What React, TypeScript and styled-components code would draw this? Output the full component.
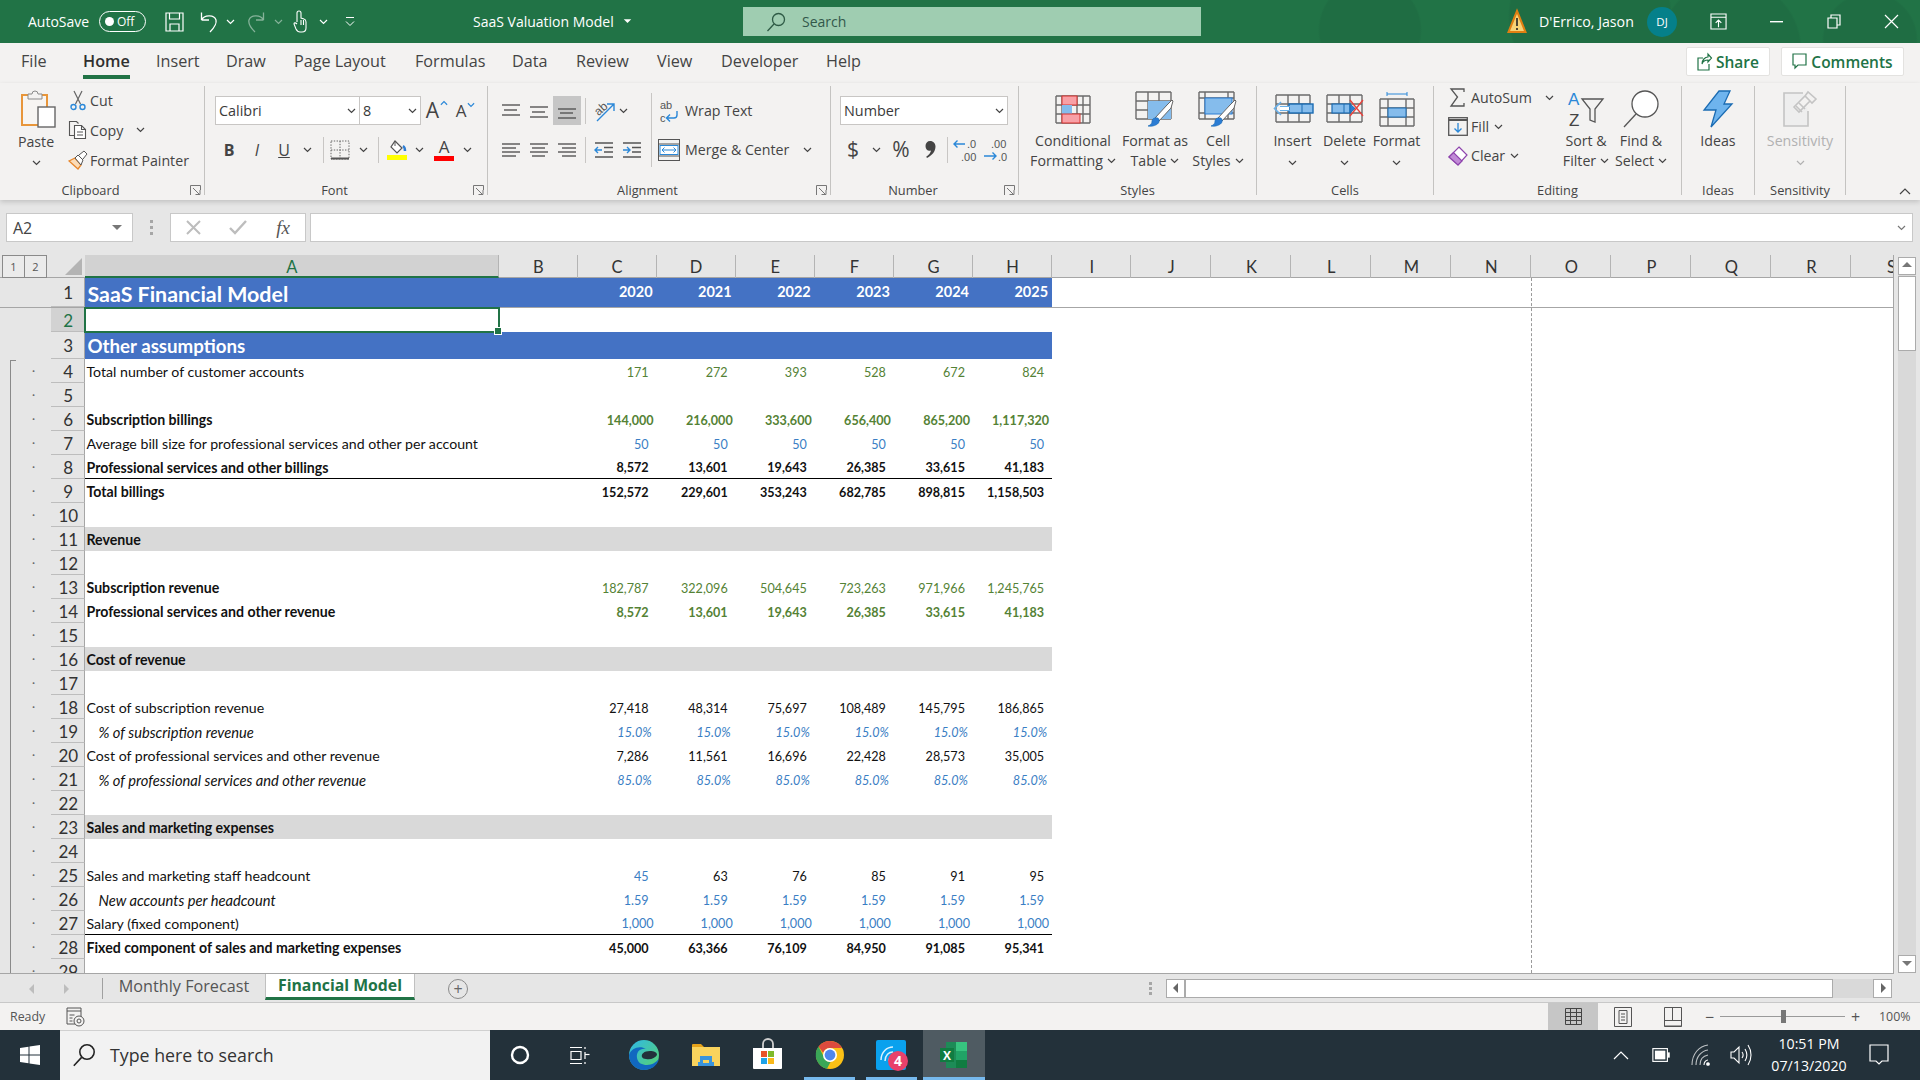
import React from 'react';
import styled, { createGlobalStyle } from 'styled-components';

const GlobalStyle = createGlobalStyle`
  html, body {
    margin: 0;
    width: 1920px;
    height: 1080px;
    overflow: hidden;
    background: #e6e6e6;
  }
  * { box-sizing: border-box; }
  svg { overflow: visible; }
`;

const UI = `"Open Sans", "Noto Sans", sans-serif`;
const CELL = `Lato, "Liberation Sans", sans-serif`;
const ICON_TEXT = `"Liberation Sans", sans-serif`;
const GREEN = '#217346';

const Page = styled.div`
  width: 1920px;
  height: 1080px;
  display: flex;
  flex-direction: column;
  font-family: ${UI};
  color: #444;
`;

/* ---------- title bar ---------- */

const TitleBar = styled.header`
  height: 43px;
  flex: none;
  display: flex;
  align-items: center;
  color: #fff;
  background:
    radial-gradient(circle at 1370px 30px, #1f6d43 0 50px, transparent 52px),
    radial-gradient(circle at 1590px 16px, #1f6d43 0 80px, transparent 82px),
    radial-gradient(circle at 1730px 50px, #1f6d43 0 70px, transparent 72px),
    radial-gradient(circle at 1870px 40px, #1f6d43 0 46px, transparent 48px),
    ${GREEN};
`;

const QuickBar = styled.div`
  width: 473px;
  padding-left: 28px;
  display: flex;
  align-items: center;
  flex: none;
`;

const AutoSaveLabel = styled.span`
  width: 71px;
  font-size: 14px;
`;

const Toggle = styled.div`
  width: 47px;
  height: 21px;
  margin-right: 14px;
  border: 1.5px solid #fff;
  border-radius: 11px;
  display: flex;
  align-items: center;
  gap: 3px;
  padding-left: 5px;
  font-size: 12px;
  &::before {
    content: '';
    width: 9px;
    height: 9px;
    border-radius: 50%;
    background: #fff;
  }
`;

const Tool = styled.div<{ $w: number; $active?: boolean; $h?: number; $dim?: boolean }>`
  width: ${p => p.$w}px;
  height: ${p => p.$h ?? 29}px;
  flex: none;
  display: flex;
  align-items: center;
  justify-content: center;
  background: ${p => (p.$active ? '#c6c6c6' : 'transparent')};
  opacity: ${p => (p.$dim ? 0.45 : 1)};
`;

const DocTitle = styled.div`
  width: 270px;
  flex: none;
  display: flex;
  align-items: center;
  gap: 9px;
  font-size: 14px;
`;

const SearchBox = styled.div`
  width: 458px;
  height: 29px;
  flex: none;
  background: #9fcdb1;
  color: #32584a;
  display: flex;
  align-items: center;
  padding-left: 23px;
  gap: 16px;
  font-size: 14px;
`;

const Account = styled.div`
  margin-left: auto;
  display: flex;
  align-items: center;
`;

const UserName = styled.span`
  font-size: 14.2px;
  width: 108px;
  margin-left: 9px;
`;

const Avatar = styled.div`
  width: 30px;
  height: 30px;
  border-radius: 50%;
  background: #05808a;
  margin-right: 13px;
  display: flex;
  align-items: center;
  justify-content: center;
  font-size: 11.5px;
`;

/* ---------- menu tabs ---------- */

const MenuRow = styled.nav`
  height: 40px;
  flex: none;
  display: flex;
  background: #f3f2f1;
  padding-left: 21px;
`;

const MenuTab = styled.div<{ $w: number; $on?: boolean }>`
  width: ${p => p.$w}px;
  height: 36px;
  padding-top: 6px;
  font-size: 16.2px;
  line-height: 24px;
  white-space: nowrap;
  font-weight: ${p => (p.$on ? 600 : 400)};
  color: ${p => (p.$on ? '#2f2f2f' : '#444')};
  position: relative;
  &::after {
    content: '';
    display: ${p => (p.$on ? 'block' : 'none')};
    position: absolute;
    left: 0;
    top: 32px;
    width: 47px;
    height: 4px;
    background: ${GREEN};
  }
`;

const MenuActions = styled.div`
  margin-left: auto;
  padding: 4px 16px 0 0;
  display: flex;
  align-items: flex-start;
  gap: 11px;
`;

const ActionButton = styled.button<{ $w: number }>`
  width: ${p => p.$w}px;
  height: 29px;
  background: #fff;
  border: 1px solid #e3e2e0;
  border-radius: 2px;
  color: ${GREEN};
  font-family: ${UI};
  font-size: 15.5px;
  font-weight: 600;
  display: flex;
  align-items: center;
  justify-content: center;
  gap: 4px;
  padding: 0;
`;

/* ---------- ribbon ---------- */

const Ribbon = styled.section`
  height: 117px;
  flex: none;
  display: flex;
  align-items: flex-start;
  padding-top: 3px;
  background: #f3f2f1;
  box-shadow: 0 2px 5px rgba(0, 0, 0, 0.16);
  position: relative;
  z-index: 1;
`;

const Group = styled.div<{ $w: number }>`
  width: ${p => p.$w}px;
  height: 114px;
  flex: none;
  display: flex;
  flex-direction: column;
`;

const GroupBody = styled.div<{ $pad?: number }>`
  height: 95px;
  padding-left: ${p => p.$pad ?? 0}px;
  display: flex;
`;

const GroupFoot = styled.div`
  height: 18px;
  display: flex;
  align-items: center;
  font-size: 12.8px;
  color: #444;
`;

const GroupName = styled.span<{ $shift?: boolean }>`
  flex: 1;
  text-align: center;
  padding-right: ${p => (p.$shift ? 5 : 0)}px;
`;

const CollapseSlot = styled.span`
  flex: 1;
  text-align: right;
  padding-right: 9px;
`;

const Launcher = styled.span`
  width: 18px;
  display: flex;
  justify-content: center;
`;

const Divider = styled.div`
  width: 1px;
  height: 109px;
  flex: none;
  background: #c4c3c1;
`;

const PasteColumn = styled.div`
  width: 60px;
  margin-left: 6px;
  padding-top: 4px;
  display: flex;
  flex-direction: column;
  align-items: center;
  font-size: 14.2px;
`;

const PasteLabel = styled.span`
  height: 20px;
  margin-top: 3px;
  display: flex;
  align-items: center;
`;

const StackColumn = styled.div<{ $w?: number; $row?: number; $top?: number }>`
  width: ${p => (p.$w ? `${p.$w}px` : 'auto')};
  margin-top: ${p => p.$top ?? 0}px;
  display: flex;
  flex-direction: column;
  & > * { height: ${p => p.$row ?? 30}px; flex: none; }
`;

const TextRow = styled.div`
  display: flex;
  align-items: center;
  font-size: 14.2px;
  white-space: nowrap;
`;

const RowIcon = styled.span<{ $w: number }>`
  width: ${p => p.$w}px;
  flex: none;
  display: flex;
  justify-content: center;
  align-items: center;
`;

const ToolRows = styled.div`
  padding-top: 10px;
  display: flex;
  flex-direction: column;
  gap: 10px;
`;

const ToolRow = styled.div`
  height: 29px;
  display: flex;
  align-items: center;
`;

const ComboBox = styled.div<{ $w: number }>`
  width: ${p => p.$w}px;
  height: 29px;
  flex: none;
  background: #fff;
  border: 1px solid #c8c6c4;
  margin-right: -1px;
  display: flex;
  align-items: center;
  justify-content: space-between;
  padding: 0 3px 0 3px;
  font-size: 14.4px;
  color: #3a3a3a;
`;

const Bar = styled.span`
  width: 1px;
  height: 26px;
  background: #c8c6c4;
`;

const BlockSplit = styled.div`
  width: 1px;
  height: 74px;
  margin: 7px 0 0 5px;
  background: #c8c6c4;
  flex: none;
`;

const FontGlyph = styled.span<{ $size?: number; $bold?: boolean; $italic?: boolean; $line?: boolean }>`
  font-family: ${UI};
  font-size: ${p => p.$size ?? 15}px;
  font-weight: ${p => (p.$bold ? 700 : 400)};
  font-style: ${p => (p.$italic ? 'italic' : 'normal')};
  text-decoration: ${p => (p.$line ? 'underline' : 'none')};
  color: #444;
  line-height: 1;
`;

const GrowGlyph = styled.span`
  display: flex;
  align-items: flex-start;
  gap: 1px;
`;

const ColorA = styled.span<{ $color: string }>`
  display: flex;
  flex-direction: column;
  align-items: center;
  font-size: 17px;
  line-height: 18px;
  color: #444;
  &::after {
    content: '';
    width: 20px;
    height: 5px;
    background: ${p => p.$color};
  }
`;

const BigButton = styled.div<{ $w: number; $muted?: boolean }>`
  width: ${p => p.$w}px;
  flex: none;
  padding-top: 4px;
  display: flex;
  flex-direction: column;
  align-items: center;
  font-size: 14.2px;
  line-height: 20px;
  color: ${p => (p.$muted ? '#b1b1b1' : '#444')};
`;

const BigIcon = styled.div`
  height: 38px;
  margin-bottom: 3px;
  display: flex;
  align-items: center;
  justify-content: center;
`;

const LabelLine = styled.span`
  height: 20px;
  display: flex;
  align-items: center;
  gap: 4px;
  white-space: nowrap;
`;

const ChevLine = styled.span`
  height: 20px;
  display: flex;
  align-items: center;
  padding-top: 4px;
`;

/* ---------- formula bar ---------- */

const FormulaBar = styled.div`
  height: 55px;
  flex: none;
  display: flex;
  padding: 13px 7px 13px 6px;
  background: #e6e6e6;
`;

const NameBox = styled.div`
  width: 127px;
  background: #fff;
  border: 1px solid #c8c8c8;
  display: flex;
  align-items: center;
  justify-content: space-between;
  padding: 0 9px 0 6px;
  font-size: 16px;
  color: #444;
`;

const GripDots = styled.div`
  width: 37px;
  flex: none;
  display: flex;
  flex-direction: column;
  align-items: center;
  justify-content: center;
  gap: 3px;
  & > i {
    width: 3px;
    height: 3px;
    background: #a6a6a6;
    display: block;
  }
`;

const FxBox = styled.div`
  width: 136px;
  margin-right: 4px;
  background: #fff;
  border: 1px solid #c8c8c8;
  display: flex;
  align-items: center;
  flex: none;
`;

const FormulaInput = styled.div`
  flex: 1;
  background: #fff;
  border: 1px solid #c8c8c8;
  display: flex;
  align-items: center;
  justify-content: flex-end;
  padding-right: 6px;
`;

const FxText = styled.span`
  font-family: "Liberation Serif", serif;
  font-style: italic;
  font-size: 19px;
  color: #555;
`;

/* ---------- sheet ---------- */

const SheetArea = styled.main`
  height: 719px;
  flex: none;
  display: flex;
  background: #e6e6e6;
`;

const Sheet = styled.div`
  width: 1894px;
  flex: none;
  overflow: hidden;
  position: relative;
  border-right: 1px solid #a6a6a6;
  border-bottom: 1px solid #a6a6a6;
  font-family: ${CELL};
  background: #fff;
`;

const COLS = '51px 33.5px 414.5px 78.5px repeat(6, 79.1px)';

const HeadRow = styled.div`
  height: 23px;
  display: grid;
  grid-template-columns: ${COLS} 79.3px repeat(10, 80px);
  background: #e6e6e6;
  border-bottom: 1px solid #a6a6a6;
`;

const LevelButtons = styled.div`
  display: flex;
  height: 23px;
  padding-left: 2px;
  & > span {
    width: 23px;
    border: 1px solid #8a8a8a;
    margin-right: -1px;
    background: #ebebeb;
    font-family: ${UI};
    font-size: 11px;
    line-height: 21px;
    text-align: center;
    color: #555;
  }
`;

const CornerCell = styled.div`
  display: flex;
  align-items: flex-end;
  justify-content: flex-end;
  padding: 0 3px 3px 0;
`;

const ColHead = styled.div<{ $on?: boolean }>`
  height: 23px;
  padding-left: 1px;
  text-align: center;
  font-size: 16.5px;
  line-height: 24px;
  color: ${p => (p.$on ? GREEN : '#333')};
  background: ${p => (p.$on ? '#d2d2d2' : 'transparent')};
  border-right: 1px solid #b4b4b4;
  border-bottom: ${p => (p.$on ? `2px solid ${GREEN}` : 'none')};
  overflow: hidden;
`;

const RowLine = styled.div<{ $h: number; $freeze?: boolean }>`
  height: ${p => p.$h}px;
  display: grid;
  grid-template-columns: ${COLS} 1fr;
  border-bottom: ${p => (p.$freeze ? '1px solid #a6a6a6' : 'none')};
`;

const Gutter = styled.div`
  background: #e6e6e6;
  display: flex;
  align-items: center;
  justify-content: flex-end;
  padding-right: 16px;
  color: #666;
  font-size: 12px;
  line-height: 1;
`;

const RowHead = styled.div<{ $on?: boolean }>`
  background: ${p => (p.$on ? '#d2d2d2' : '#e6e6e6')};
  color: ${p => (p.$on ? GREEN : '#333')};
  border-bottom: 1px solid #bdbdbd;
  border-right: 1px solid #a6a6a6;
  font-size: 17px;
  text-align: center;
  display: flex;
  align-items: center;
  justify-content: center;
  padding: 1px 0 0 2px;
`;

const Cell = styled.div<{
  $fill?: string;
  $rule?: boolean;
  $right?: number;
  $tone?: string;
  $bold?: boolean;
  $italic?: boolean;
  $indent?: number;
  $size?: number;
  $pick?: boolean;
  $top?: number;
  $year?: boolean;
}>`
  background: ${p => p.$fill ?? 'transparent'};
  border-bottom: ${p => (p.$rule ? '1px solid #000' : 'none')};
  padding: ${p => p.$top ?? 1}px ${p => p.$right ?? 0}px 0 ${p => p.$indent ?? 0}px;
  color: ${p => p.$tone ?? '#111'};
  font-weight: ${p => (p.$bold ? 700 : 400)};
  font-style: ${p => (p.$italic ? 'italic' : 'normal')};
  font-size: ${p => p.$size ?? 12.6}px;
  white-space: nowrap;
  display: flex;
  align-items: ${p => (p.$year ? 'flex-start' : 'center')};
  justify-content: ${p => (p.$right !== undefined ? 'flex-end' : 'flex-start')};
  position: relative;
  ${p =>
    p.$pick
      ? `
    z-index: 2;
    box-shadow: 0 0 0 1px ${GREEN}, inset 0 0 0 1px ${GREEN};
    &::after {
      content: '';
      position: absolute;
      right: -3px;
      bottom: -3px;
      width: 6px;
      height: 6px;
      background: ${GREEN};
      border: 1px solid #fff;
    }
  `
      : ''}
`;

const OutlineRail = styled.div`
  position: absolute;
  left: 10px;
  top: 105px;
  bottom: 0;
  width: 6px;
  border-left: 1.5px solid #8a8a8a;
  border-top: 1.5px solid #8a8a8a;
`;

const PageBreak = styled.div`
  position: absolute;
  left: 1531px;
  top: 23px;
  bottom: 0;
  border-left: 1px dashed #9a9a9a;
`;

const VScroll = styled.div`
  width: 26px;
  flex: none;
  padding: 2px 4px 1px 4px;
  display: flex;
  flex-direction: column;
`;

const ScrollButton = styled.div`
  height: 18px;
  flex: none;
  background: #fff;
  border: 1px solid #ababab;
  display: flex;
  align-items: center;
  justify-content: center;
`;

const VTrack = styled.div`
  flex: 1;
  background: #d9d9d9;
  padding-top: 1px;
`;

const VThumb = styled.div`
  height: 75px;
  background: #fff;
  border: 1px solid #ababab;
`;

/* ---------- sheet tabs ---------- */

const TabsBar = styled.div`
  height: 29px;
  flex: none;
  display: flex;
  background: #e6e6e6;
  border-bottom: 1px solid #c8c8c8;
`;

const TabNav = styled.div`
  width: 103px;
  height: 21px;
  margin-top: 4px;
  display: flex;
  align-items: center;
  padding-left: 26px;
  gap: 22px;
  border-right: 1px solid #a0a0a0;
  flex: none;
`;

const SheetTab = styled.div<{ $on?: boolean; $w: number }>`
  width: ${p => p.$w}px;
  height: 26px;
  flex: none;
  display: flex;
  align-items: center;
  justify-content: center;
  padding-bottom: 2px;
  white-space: nowrap;
  font-size: ${p => (p.$on ? 15.8 : 16.2)}px;
  font-weight: ${p => (p.$on ? 700 : 400)};
  color: ${p => (p.$on ? GREEN : '#555')};
  background: ${p => (p.$on ? '#fff' : 'transparent')};
  border-bottom: ${p => (p.$on ? `3px solid ${GREEN}` : 'none')};
  border-left: ${p => (p.$on ? '1px solid #c0c0c0' : 'none')};
  border-right: ${p => (p.$on ? '1px solid #c0c0c0' : 'none')};
`;

const AddSheet = styled.div`
  width: 20px;
  height: 20px;
  margin: 5px 0 0 33px;
  border: 1.5px solid #8a8a8a;
  border-radius: 50%;
  flex: none;
  color: #666;
  display: flex;
  align-items: center;
  justify-content: center;
  font-size: 16px;
  line-height: 1;
`;

const HScrollWrap = styled.div`
  margin-left: auto;
  width: 786px;
  padding: 5px 28px 5px 0;
  display: flex;
  align-items: center;
`;

const HGrip = styled(GripDots)`
  width: 32px;
  gap: 2px;
`;

const HButton = styled(ScrollButton)`
  width: 19px;
  height: 19px;
`;

const HTrack = styled.div`
  flex: 1;
  height: 19px;
  background: #d9d9d9;
`;

const HThumb = styled.div`
  width: 648px;
  height: 19px;
  background: #fff;
  border: 1px solid #ababab;
`;

/* ---------- status bar ---------- */

const StatusBar = styled.footer`
  height: 27px;
  flex: none;
  display: flex;
  align-items: center;
  background: #f3f2f1;
  font-size: 12.4px;
  color: #555;
  padding-left: 10px;
`;

const StatusRight = styled.div`
  margin-left: auto;
  display: flex;
  align-items: center;
  height: 27px;
`;

const ViewButton = styled.div<{ $on?: boolean }>`
  width: 50px;
  height: 27px;
  background: ${p => (p.$on ? '#c6c6c6' : 'transparent')};
  display: flex;
  align-items: center;
  justify-content: center;
`;

const ZoomBar = styled.div`
  width: 125px;
  height: 1px;
  background: #9a9a9a;
  margin: 0 5px;
  position: relative;
  &::after {
    content: '';
    position: absolute;
    left: 61px;
    top: -6px;
    width: 5px;
    height: 13px;
    background: #777;
  }
`;

const ZoomSign = styled.span`
  font-size: 16px;
  width: 11px;
  text-align: center;
  color: #555;
  line-height: 1;
`;

const ZoomValue = styled.span`
  width: 59px;
  padding-left: 18px;
  font-size: 12.4px;
`;

/* ---------- taskbar ---------- */

const Taskbar = styled.div`
  height: 50px;
  flex: none;
  display: flex;
  align-items: stretch;
  background: #23313a;
  color: #fff;
`;

const StartButton = styled.div`
  width: 60px;
  flex: none;
  display: flex;
  align-items: center;
  justify-content: center;
`;

const TaskSearch = styled.div`
  width: 430px;
  flex: none;
  background: #f2f2f2;
  color: #333;
  display: flex;
  align-items: center;
  padding: 0 0 2px 12px;
  gap: 14px;
  font-size: 17.8px;
  border-top: 1px solid #d0d0d0;
`;

const TaskItem = styled.div<{ $w: number; $open?: boolean; $current?: boolean }>`
  width: ${p => p.$w}px;
  flex: none;
  display: flex;
  align-items: center;
  justify-content: center;
  position: relative;
  background: ${p => (p.$current ? '#4f5b62' : 'transparent')};
  &::after {
    content: '';
    display: ${p => (p.$open ? 'block' : 'none')};
    position: absolute;
    bottom: 0;
    left: ${p => (p.$current ? 0 : 5)}px;
    right: ${p => (p.$current ? 0 : 6)}px;
    height: 3px;
    background: #76b9ed;
  }
`;

const Tray = styled.div`
  margin-left: auto;
  display: flex;
  align-items: center;
  padding-right: 17px;
`;

const TrayItem = styled.div`
  width: 40px;
  display: flex;
  justify-content: center;
`;

const Clock = styled.div`
  width: 92px;
  margin-left: 2px;
  text-align: center;
  font-size: 14.2px;
  line-height: 22px;
`;

const NotifyBox = styled.div`
  width: 48px;
  display: flex;
  justify-content: center;
`;

/* ---------- icons ---------- */

const Chev = ({ c = '#444' }: { c?: string }) => (
  <svg width="9" height="6" viewBox="0 0 9 6"><path d="M1 1l3.500 3.500L8 1" fill="none" stroke={c} strokeWidth="1.200" /></svg>
);

const LaunchIcon = () => (
  <svg width="11" height="11" viewBox="0 0 11 11" fill="none" stroke="#777">
    <path d="M.5 10V.5H10.500V5" />
    <path d="M3 3l6 6M5.500 9.500h4.500V5" />
  </svg>
);

const PasteIcon = () => (
  <svg width="38" height="38" viewBox="0 0 38 38">
    <rect x="5" y="5" width="25" height="30" fill="#f7f5f2" stroke="#e8963a" strokeWidth="2" />
    <path d="M11 9V4h4a3 3 0 016 0h4v5z" fill="#f3f2f1" stroke="#8a8a8a" />
    <rect x="21" y="17" width="17" height="20" fill="#fff" stroke="#666" strokeWidth="1.400" />
  </svg>
);

const CutIcon = () => (
  <svg width="16" height="21" viewBox="0 0 16 21" fill="none">
    <path d="M4 1l6.500 13M12 1L5.500 14" stroke="#666" strokeWidth="1.200" />
    <circle cx="3.500" cy="17" r="2.500" stroke="#2b88d8" strokeWidth="1.400" />
    <circle cx="12.500" cy="17" r="2.500" stroke="#2b88d8" strokeWidth="1.400" />
  </svg>
);

const CopyIcon = () => (
  <svg width="20" height="20" viewBox="0 0 20 20" fill="none" stroke="#555" strokeWidth="1.100">
    <path d="M6.500 15.500H1.500V1.500h7l2 2" />
    <path d="M6.500 5.500h7l4 4v9h-11z" fill="#fff" />
    <path d="M13.500 5.500v4h4M9 12h6M9 15h6" />
  </svg>
);

const PainterIcon = () => (
  <svg width="20" height="20" viewBox="0 0 20 20">
    <path d="M1 11l6-3 6 7-3 4z" fill="#fbdcb8" stroke="#e8862a" strokeWidth="1.300" />
    <path d="M7 8l3-3 5 5-2 5z" fill="#fff" stroke="#555" />
    <path d="M11 5l5-4 3 3-4 5" fill="#fff" stroke="#555" />
  </svg>
);

const BorderIcon = () => (
  <svg width="20" height="20" viewBox="0 0 20 20" fill="none" stroke="#666">
    <path d="M1 1h18v18H1z" strokeDasharray="1.400 1.400" />
    <path d="M10 1v18M1 10h18" strokeDasharray="1.400 1.400" />
    <path d="M1 18.500h18" strokeWidth="2" stroke="#555" />
  </svg>
);

const FillIcon = () => (
  <svg width="20" height="15" viewBox="0 0 20 15" fill="none">
    <path d="M8 1l7 7-5 5-6-6z" stroke="#555" strokeWidth="1.200" fill="#fff" />
    <path d="M8 1V6" stroke="#555" />
    <path d="M16 6c2 1 2 3 2 5" stroke="#2b7cd3" strokeWidth="2.500" />
  </svg>
);

const FillA = () => (
  <ColorA $color="#ffff00">
    <FillIcon />
  </ColorA>
);

const AlignLines = ({ y, lean }: { y: number[]; lean?: 'l' | 'c' | 'r' }) => {
  const segs = y.map((v, i) => {
    const short = i % 2 === 1;
    const x1 = short && lean === 'r' ? 5 : short && lean === 'c' ? 3 : 1;
    const x2 = short && lean === 'l' ? 15 : short && lean === 'c' ? 16 : 19;
    return <path key={v} d={`M${x1} ${v}H${x2}`} />;
  });
  return (
    <svg width="20" height="18" viewBox="0 0 20 18" fill="none" stroke="#555" strokeWidth="1.400">
      {segs}
    </svg>
  );
};

const OrientIcon = () => (
  <svg width="24" height="24" viewBox="0 0 24 24" fill="none">
    <text x="3" y="14" fontSize="12" fontFamily={ICON_TEXT} fill="#555" transform="rotate(-42 9 11)">ab</text>
    <path d="M5 22L22 5M15 5h7v7" stroke="#2b88d8" strokeWidth="1.400" />
  </svg>
);

const IndentIcon = ({ out }: { out?: boolean }) => (
  <svg width="20" height="18" viewBox="0 0 20 18" fill="none">
    <path d="M1 2h18M10 6.500h9M10 11h9M1 16h18" stroke="#555" strokeWidth="1.400" />
    {out
      ? <path d="M8 9H1M4 6L1 9l3 3" stroke="#2b88d8" strokeWidth="1.400" />
      : <path d="M1 9h7M5 6l3 3-3 3" stroke="#2b88d8" strokeWidth="1.400" />}
  </svg>
);

const WrapIcon = () => (
  <svg width="20" height="24" viewBox="0 0 20 24" fill="none">
    <text x="1" y="10" fontSize="11" fontFamily={ICON_TEXT} fill="#555">ab</text>
    <text x="1" y="22.700" fontSize="11" fontFamily={ICON_TEXT} fill="#555">c</text>
    <path d="M18 12v4a3 3 0 01-3 3H8M11 15.500l-3.500 3.500 3.500 3.500" stroke="#2b88d8" strokeWidth="1.400" />
  </svg>
);

const MergeIcon = () => (
  <svg width="22" height="22" viewBox="0 0 22 22" fill="none">
    <rect x=".5" y=".5" width="21" height="21" stroke="#555" />
    <path d="M.5 5h21M.5 17h21" stroke="#555" />
    <rect x="2" y="6.500" width="18" height="9" stroke="#2b88d8" fill="#fff" />
    <path d="M4 11h14M6.500 8.500L4 11l2.500 2.500M15.500 8.500L18 11l-2.500 2.500" stroke="#2b88d8" />
  </svg>
);

const DecimalIcon = ({ more }: { more?: boolean }) => (
  <svg width="26" height="24" viewBox="0 0 26 24">
    {more ? (
      <>
        <path d="M12 6H1M4.500 2.500L1 6l3.500 3.500" fill="none" stroke="#2b88d8" strokeWidth="1.400" />
        <text x="14" y="10" fontSize="11" fontFamily={ICON_TEXT} fill="#555">.0</text>
        <text x="8" y="22.700" fontSize="11" fontFamily={ICON_TEXT} fill="#555">.00</text>
      </>
    ) : (
      <>
        <text x="8" y="10" fontSize="11" fontFamily={ICON_TEXT} fill="#555">.00</text>
        <path d="M1 18h12M9.500 14.500L13 18l-3.500 3.500" fill="none" stroke="#2b88d8" strokeWidth="1.400" />
        <text x="15" y="22.700" fontSize="11" fontFamily={ICON_TEXT} fill="#555">.0</text>
      </>
    )}
  </svg>
);

const CommaIcon = () => (
  <svg width="11" height="17" viewBox="0 0 11 17">
    <path d="M5 0c3.500 0 5.500 2.500 5.500 5.500 0 5-3.500 9-8.500 11.500l-.8-1.200C4 14 5.800 11.500 6 9.500 3 10.500.5 8.500.5 5 .5 2 2.500 0 5 0z" fill="#444" />
  </svg>
);

const GridBase = ({ xs, ys }: { xs: number[]; ys: number[] }) => (
  <path
    d={`${xs.map(x => `M${x} ${ys[0]}V${ys[ys.length - 1]}`).join('')}${ys.map(y => `M${xs[0]} ${y}H${xs[xs.length - 1]}`).join('')}`}
    fill="none"
    stroke="#6b6b6b"
    strokeWidth="1.400"
  />
);

const ConditionalIcon = () => (
  <svg width="36" height="29" viewBox="0 0 36 29">
    <GridBase xs={[1, 7, 22, 28, 35]} ys={[1, 10, 19, 28]} />
    <rect x="7" y="1" width="15" height="9" fill="#f8a0a6" stroke="#d8332f" />
    <rect x="7" y="10" width="10" height="9" fill="#85bcec" />
    <rect x="7" y="19" width="18" height="9" fill="#f8a0a6" stroke="#d8332f" />
  </svg>
);

const Brush = () => (
  <g>
    <path d="M32 14L37 9 38 10 36 17 24 30 20 27z" fill="#fff" stroke="#666" />
    <path d="M20 27c3-1 5 1 4 4-1 3-7 5-11 4 3-1 4-3 4-5 0-1 1-3 3-3z" fill="#2b7cd3" stroke="#1b6cb3" strokeWidth=".6" />
  </g>
);

const TableIcon = () => (
  <svg width="40" height="36" viewBox="0 0 40 36">
    <GridBase xs={[1, 13, 24, 36]} ys={[1, 10, 19, 28]} />
    <rect x="13" y="10" width="23" height="18" fill="#85bcec" />
    <Brush />
  </svg>
);

const CellStyleIcon = () => (
  <svg width="40" height="36" viewBox="0 0 40 36">
    <GridBase xs={[1, 7, 30, 36]} ys={[1, 7, 22, 28]} />
    <rect x="7" y="7" width="27" height="16" fill="#85bcec" stroke="#2b7cd3" />
    <Brush />
  </svg>
);

const InsertIcon = () => (
  <svg width="42" height="30" viewBox="0 0 42 30">
    <GridBase xs={[4, 16, 27, 38]} ys={[1, 10, 19, 28]} />
    <rect x="17" y="10" width="24" height="9" fill="#85bcec" stroke="#1b6cb3" strokeWidth="1.400" />
    <path d="M30 10v9" stroke="#1b6cb3" />
    <path d="M17 12.500H8v4h9z" fill="#fff" />
    <path d="M18 12.500H8M18 16.500H8" stroke="#68b0ea" />
    <path d="M9 8L2.500 14.500 9 21" fill="none" stroke="#68b0ea" strokeWidth="1.600" />
  </svg>
);

const DeleteIcon = () => (
  <svg width="38" height="30" viewBox="0 0 38 30">
    <GridBase xs={[1, 13, 24, 36]} ys={[1, 10, 19, 28]} />
    <rect x="6" y="10" width="18" height="9" fill="#85bcec" stroke="#1b6cb3" strokeWidth="1.200" />
    <path d="M18 10v9M24 10l5 4.500-5 4.500z" fill="#2b7cd3" stroke="#1b6cb3" />
    <path d="M24 6l13 16M37 6L24 22" stroke="#e8413c" strokeWidth="1.300" fill="none" />
  </svg>
);

const FormatIcon = () => (
  <svg width="36" height="36" viewBox="0 0 36 36">
    <path d="M8 1v4M28 1v4M8 3h20" stroke="#2b88d8" fill="none" />
    <GridBase xs={[1, 9, 27, 35]} ys={[8, 17, 26, 35]} />
    <rect x="9" y="17" width="18" height="9" fill="#85bcec" stroke="#1b6cb3" />
  </svg>
);

const SigmaIcon = () => (
  <svg width="17" height="19" viewBox="0 0 17 19" fill="none"><path d="M15 4V1H2l6.500 8L2 18h13v-3" stroke="#555" strokeWidth="1.300" /></svg>
);

const FillDownIcon = () => (
  <svg width="20" height="19" viewBox="0 0 20 19" fill="none">
    <rect x=".7" y=".7" width="18.600" height="17.600" stroke="#555" strokeWidth="1.300" />
    <path d="M.7 3h18.600" stroke="#555" strokeWidth="2" />
    <path d="M10 6v9M6.500 11.500L10 15l3.500-3.500" stroke="#2b88d8" strokeWidth="1.300" />
  </svg>
);

const EraserIcon = () => (
  <svg width="20" height="20" viewBox="0 0 20 20">
    <path d="M11 1l8 8-9 10-9-8z" fill="#fff" stroke="#8e44ad" strokeWidth="1.200" />
    <path d="M1 11l4.500-4.500 8.500 8.500-4 4z" fill="#c08ad6" stroke="#8e44ad" strokeWidth="1.200" />
  </svg>
);

const SortIcon = () => (
  <svg width="38" height="38" viewBox="0 0 38 38" fill="none">
    <text x="1" y="15" fontSize="17" fontFamily={ICON_TEXT} fill="#2b88d8">A</text>
    <text x="2" y="35.500" fontSize="17" fontFamily={ICON_TEXT} fill="#444">Z</text>
    <path d="M15 9h21l-8 10v13l-5-2V19z" stroke="#555" strokeWidth="1.300" />
  </svg>
);

const FindIcon = () => (
  <svg width="38" height="38" viewBox="0 0 38 38" fill="none" stroke="#555" strokeWidth="1.300">
    <circle cx="23" cy="14" r="13" fill="#fff" />
    <path d="M14 24L2 37" />
  </svg>
);

const BoltIcon = () => (
  <svg width="30" height="38" viewBox="0 0 30 38">
    <path d="M16 1h11l-6 13h8L8 37l5-17H1z" fill="#6eb4ee" stroke="#1b6cb3" strokeWidth="1.300" />
  </svg>
);

const SensitivityIcon = () => (
  <svg width="36" height="38" viewBox="0 0 36 38" fill="none" stroke="#c4c4c4" strokeWidth="1.600">
    <path d="M21 3H2v33h24V21" fill="#eeeeee" />
    <path d="M12 17l11-11 5 5-11 11zM23 6l3-4 8 7-4 4-2-2z" fill="#f3f2f1" />
    <path d="M14 16l6 6M17 13l6 6" />
  </svg>
);

const WinSaveIcon = () => (
  <svg width="19" height="20" viewBox="0 0 19 20" fill="none" stroke="#fff" strokeWidth="1.200">
    <path d="M1 1h17v18H1z" />
    <path d="M4.500 1v6h10V1M5 19v-7h9v7" />
  </svg>
);

const UndoIcon = () => (
  <svg width="18" height="22" viewBox="0 0 18 22" fill="none" stroke="#fff" strokeWidth="1.300">
    <path d="M1.500 9V1.500M1.500 9H9M1.500 9C4 4 14 3 16 9c1 4-2 8-6 12" />
  </svg>
);

const RedoIcon = () => (
  <svg width="18" height="22" viewBox="0 0 18 22" fill="none" stroke="#fff" strokeWidth="1.300">
    <path d="M16.500 9V1.500M16.500 9H9M16.500 9C14 4 4 3 2 9c-1 4 2 8 6 12" />
  </svg>
);

const TouchIcon = () => (
  <svg width="14" height="23" viewBox="0 0 14 23" fill="none" stroke="#fff" strokeWidth="1.100">
    <path d="M4 12V3a2 2 0 014 0v5l3 1c2 .5 2 2 2 3v6c0 3-2 4-4 4H7c-2 0-3-1-4-3l-2-5c0-1 1-2 3 0" />
    <path d="M8 10v5M10.500 10v5" />
  </svg>
);

const CustomizeIcon = () => (
  <svg width="10" height="12" viewBox="0 0 10 12" fill="none" stroke="#fff"><path d="M1 1.500h8" /><path d="M1 5.500l4 4 4-4" /></svg>
);

const LensIcon = ({ c = '#fff', size = 20 }: { c?: string; size?: number }) => (
  <svg width={size} height={size} viewBox="0 0 20 20" fill="none" stroke={c} strokeWidth="1.300">
    <circle cx="12.500" cy="7.500" r="6" />
    <path d="M8 12L1.500 19" />
  </svg>
);

const WarnIcon = () => (
  <svg width="26" height="25" viewBox="0 0 20 25">
    <path d="M10 2L18.500 23H1.500z" fill="#f6d276" stroke="#e07f12" strokeWidth="2" />
    <path d="M10 9v8M10 19v2" stroke="#222" strokeWidth="1.600" />
  </svg>
);

const DisplayIcon = () => (
  <svg width="17" height="17" viewBox="0 0 18 18" fill="none" stroke="#fff" strokeWidth="1.200">
    <path d="M1 1h16v16H1zM1 4.500h16M9 15V8M6 10.500l3-3 3 3" />
  </svg>
);

const RestoreIcon = () => (
  <svg width="14" height="15" viewBox="0 0 14 15" fill="none" stroke="#fff" strokeWidth="1.200">
    <path d="M1 4h9v10H1zM4 4V1h9v10h-3" />
  </svg>
);

const ShareIcon = () => (
  <svg width="15" height="19" viewBox="0 0 15 19" fill="none" stroke={GREEN} strokeWidth="1.200">
    <path d="M6 6H1v12h11v-6" />
    <path d="M5 12c0-4 3-7 6-7V2l3.500 4-3.500 4V8c-3 0-5 1-6 4z" />
  </svg>
);

const BubbleIcon = () => (
  <svg width="15" height="17" viewBox="0 0 15 17" fill="none" stroke={GREEN} strokeWidth="1.200">
    <path d="M1 1h13v11H6l-3 3v-3H1z" />
  </svg>
);

const Tri = ({ dir, c = '#555', size = 12 }: { dir: 'u' | 'd' | 'l' | 'r'; c?: string; size?: number }) => {
  const d = { u: 'M1 7L6 2l5 5z', d: 'M1 3l5 5 5-5z', l: 'M8 1L3 6l5 5z', r: 'M4 1l5 5-5 5z' }[dir];
  return <svg width={size} height={size} viewBox="0 0 12 12"><path d={d} fill={c} /></svg>;
};

const MacroIcon = () => (
  <svg width="19" height="20" viewBox="0 0 19 20" fill="none" stroke="#555">
    <path d="M1 1h14v16H1zM1 4h14" />
    <path d="M3.500 8h5M3.500 11h3M3.500 14h3" />
    <circle cx="13" cy="14" r="5" fill="#f3f2f1" />
    <circle cx="13" cy="14" r="2" />
  </svg>
);

const GridViewIcon = () => (
  <svg width="17" height="17" viewBox="0 0 17 17" fill="none" stroke="#444">
    <path d="M.5 .5h16v16H.5zM.5 4.500h16M.5 8.500h16M.5 12.500h16M5.500 .5v16M11.500 .5v16" />
  </svg>
);

const PageViewIcon = () => (
  <svg width="18" height="20" viewBox="0 0 18 20" fill="none" stroke="#555">
    <path d="M.5 .5h17v19H.5zM5 3.500h8v13H5zM7 7h4M7 10h4M7 13h4" />
  </svg>
);

const BreakViewIcon = () => (
  <svg width="18" height="20" viewBox="0 0 18 20" fill="none" stroke="#555">
    <path d="M.5 .5h17v19H.5zM.5 13.500h17M8.500 .5v13M.5 19h17" />
  </svg>
);

const WinLogo = () => (
  <svg width="20" height="20" viewBox="0 0 20 20" fill="#fff">
    <path d="M0 3l8.500-1.200V9.500H0zM9.500 1.600L20 0v9.500H9.500zM0 10.500h8.500v7.700L0 17zM9.500 10.500H20V20L9.500 18.400z" />
  </svg>
);

const TaskViewIcon = () => (
  <svg width="20" height="19" viewBox="0 0 20 19" fill="none" stroke="#fff" strokeWidth="1.200">
    <path d="M0 1.500h12M0 17.500h12M1 5.500h10v8H1zM15 1v2M15 6v7M15 16v2" />
    <path d="M15 8.500h4.500" />
  </svg>
);

const EdgeIcon = () => (
  <svg width="32" height="32" viewBox="0 0 32 32">
    <defs>
      <linearGradient id="edgeA" x1="0" x2="1" y1="0" y2="1">
        <stop offset="0" stopColor="#2fb8e8" />
        <stop offset="1" stopColor="#59d36a" />
      </linearGradient>
    </defs>
    <circle cx="16" cy="16" r="15" fill="url(#edgeA)" />
    <path d="M31 20c-2 7-8 11-15 11C7 31 1 24 1 16 3 9 12 6 18 10c-6-1-10 3-9 9 1 5 5 7 10 7 5 0 9-3 12-6z" fill="#1168c0" />
    <path d="M18 20c5 1 9-1 11-4 0-3-3-4-7-4-6 0-9 3-8 6 .5 1 2 2 4 2z" fill="#23313a" />
  </svg>
);

const FolderIcon = () => (
  <svg width="30" height="24" viewBox="0 0 30 24">
    <path d="M1 2a1 1 0 011-1h8l3 3H1z" fill="#e5a21a" />
    <path d="M1 4h28v19H1z" fill="#f9d35d" />
    <path d="M9 13h12v7H18v-3h-6v3H9z" fill="#3a94dc" />
    <path d="M7 19h16v4H7z" fill="#3a94dc" />
    <path d="M12 17h6v3h-6z" fill="#f9d35d" />
  </svg>
);

const StoreIcon = () => (
  <svg width="30" height="32" viewBox="0 0 30 32">
    <path d="M10 9V5a5 5 0 0110 0v4" fill="none" stroke="#cfcfcf" strokeWidth="1.800" />
    <path d="M0 9h29v20a1 1 0 01-1 1H1a1 1 0 01-1-1z" fill="#fff" />
    <path d="M8 12h6v6H8z" fill="#e8532a" />
    <path d="M15 12h6v6h-6z" fill="#7fba2a" />
    <path d="M8 19h6v6H8z" fill="#1fa3e8" />
    <path d="M15 19h6v6h-6z" fill="#f9b81a" />
  </svg>
);

const ChromeIcon = () => (
  <svg width="28" height="28" viewBox="0 0 28 28">
    <circle cx="14" cy="14" r="14" fill="#fbc116" />
    <path d="M14 0a14 14 0 0112.100 7H14a7 7 0 00-6.700 5L2.500 5.600A14 14 0 0114 0z" fill="#dd4b3e" />
    <path d="M2.500 5.600L8.500 17a7 7 0 006 4L11 27.700A14 14 0 012.500 5.600z" fill="#3aa757" />
    <circle cx="14" cy="14" r="7" fill="#fff" />
    <circle cx="14" cy="14" r="5.400" fill="#4f87ed" />
  </svg>
);

const NotifyAppIcon = () => (
  <svg width="34" height="32" viewBox="0 0 34 32">
    <rect x="1" y="1" width="30" height="30" rx="2" fill="#0aa1ee" />
    <path d="M6 21c0-8 6-13 12-13M10 22c0-6 4-9 8-9M14 22c0-3 2-5 4-5" fill="none" stroke="#d8f1ff" strokeWidth="1.500" />
    <circle cx="23" cy="22" r="10" fill="#e8416b" />
    <text x="23" y="27" textAnchor="middle" fontSize="14" fontWeight="700" fontFamily="Open Sans" fill="#fff">4</text>
  </svg>
);

const ExcelIcon = () => (
  <svg width="30" height="30" viewBox="0 0 30 30">
    <path d="M7 2h21v26H7z" fill="#1d8b57" />
    <path d="M17 2h11v9H17z" fill="#37c47f" />
    <path d="M17 11h11v9H17z" fill="#21a366" />
    <path d="M17 20h11v8H17z" fill="#107c41" />
    <path d="M1 8h14v14H1z" fill="#107c41" />
    <text x="8" y="20" textAnchor="middle" fontSize="12" fontWeight="700" fontFamily="Open Sans" fill="#fff">X</text>
  </svg>
);

const CircleIcon = () => (
  <svg width="20" height="20" viewBox="0 0 20 20" fill="none"><circle cx="10" cy="10" r="8" stroke="#fff" strokeWidth="2.400" /></svg>
);

const TrayCaret = () => (
  <svg width="16" height="10" viewBox="0 0 16 10" fill="none" stroke="#fff" strokeWidth="1.200"><path d="M1 9l7-7 7 7" /></svg>
);

const BatteryIcon = () => (
  <svg width="18" height="14" viewBox="0 0 20 16">
    <rect x=".7" y=".7" width="16.600" height="14.600" fill="none" stroke="#fff" strokeWidth="1.300" />
    <rect x="3" y="3" width="12" height="10" fill="#fff" />
    <rect x="18" y="5" width="2" height="6" fill="#fff" />
  </svg>
);

const WifiIcon = () => (
  <svg width="20" height="22" viewBox="0 0 20 22" fill="none" stroke="#fff" strokeWidth="1.100">
    <path d="M1 21C1 10 8 2 17 1M5 21c0-8 5-14 12-15M9 21c0-5 3-9 8-10" opacity=".7" />
    <path d="M13 21c0-3 2-5 4-5" />
    <circle cx="17" cy="20" r="1.300" fill="#fff" />
  </svg>
);

const VolumeIcon = () => (
  <svg width="22" height="24" viewBox="0 0 22 24" fill="none" stroke="#fff" strokeWidth="1.100">
    <path d="M1 9h3l5-5v16l-5-5H1z" />
    <path d="M12 9c1.500 2 1.500 4 0 6M15 6c2.500 4 2.500 8 0 12M18 2c4 6 4 14 0 20" />
  </svg>
);

const NotifyIcon = () => (
  <svg width="20" height="22" viewBox="0 0 20 22" fill="none" stroke="#fff" strokeWidth="1.200">
    <path d="M1 1h18v16h-6l-3 3-3-3H1z" />
  </svg>
);

/* ---------- data ---------- */

type Tone = 'green' | 'blue' | 'black';
const TONES: Record<Tone, string> = { green: '#548235', blue: '#3a7ec4', black: '#111' };

type DataRow = {
  n: number;
  label?: string;
  kind?: 'title' | 'band' | 'section' | 'pick';
  bold?: boolean;
  italic?: boolean;
  values?: string[];
  tone?: Tone;
  firstTone?: Tone;
  valueBold?: boolean;
  valueItalic?: boolean;
  right?: number;
  rule?: boolean;
};

const YEARS = ['2020', '2021', '2022', '2023', '2024', '2025'];
const fifty = ['50', '50', '50', '50', '50', '50'];
const pct15 = Array(6).fill('15.0%');
const pct85 = Array(6).fill('85.0%');

const ROWS: DataRow[] = [
  { n: 1, label: 'SaaS Financial Model', kind: 'title', values: YEARS },
  { n: 2, kind: 'pick' },
  { n: 3, label: 'Other assumptions', kind: 'band' },
  { n: 4, label: 'Total number of customer accounts', values: ['171', '272', '393', '528', '672', '824'], tone: 'green', right: 8 },
  { n: 5 },
  { n: 6, label: 'Subscription billings', bold: true, values: ['144,000', '216,000', '333,600', '656,400', '865,200', '1,117,320'], tone: 'green', valueBold: true, right: 3 },
  { n: 7, label: 'Average bill size for professional services and other per account', values: fifty, tone: 'blue', right: 8 },
  { n: 8, label: 'Professional services and other billings', bold: true, values: ['8,572', '13,601', '19,643', '26,385', '33,615', '41,183'], tone: 'black', valueBold: true, right: 8, rule: true },
  { n: 9, label: 'Total billings', bold: true, values: ['152,572', '229,601', '353,243', '682,785', '898,815', '1,158,503'], tone: 'black', valueBold: true, right: 8 },
  { n: 10 },
  { n: 11, label: 'Revenue', kind: 'section' },
  { n: 12 },
  { n: 13, label: 'Subscription revenue', bold: true, values: ['182,787', '322,096', '504,645', '723,263', '971,966', '1,245,765'], tone: 'green', right: 8 },
  { n: 14, label: 'Professional services and other revenue', bold: true, values: ['8,572', '13,601', '19,643', '26,385', '33,615', '41,183'], tone: 'green', valueBold: true, right: 8 },
  { n: 15 },
  { n: 16, label: 'Cost of revenue', kind: 'section' },
  { n: 17 },
  { n: 18, label: 'Cost of subscription revenue', values: ['27,418', '48,314', '75,697', '108,489', '145,795', '186,865'], tone: 'black', right: 8 },
  { n: 19, label: '% of subscription revenue', italic: true, values: pct15, tone: 'blue', valueItalic: true, right: 5 },
  { n: 20, label: 'Cost of professional services and other revenue', values: ['7,286', '11,561', '16,696', '22,428', '28,573', '35,005'], tone: 'black', right: 8 },
  { n: 21, label: '% of professional services and other revenue', italic: true, values: pct85, tone: 'blue', valueItalic: true, right: 5 },
  { n: 22 },
  { n: 23, label: 'Sales and marketing expenses', kind: 'section' },
  { n: 24 },
  { n: 25, label: 'Sales and marketing staff headcount', values: ['45', '63', '76', '85', '91', '95'], tone: 'black', firstTone: 'blue', right: 8 },
  { n: 26, label: 'New accounts per headcount', italic: true, values: ['1.59', '1.59', '1.59', '1.59', '1.59', '1.59'], tone: 'blue', right: 8 },
  { n: 27, label: 'Salary (fixed component)', values: ['1,000', '1,000', '1,000', '1,000', '1,000', '1,000'], tone: 'blue', right: 3, rule: true },
  { n: 28, label: 'Fixed component of sales and marketing expenses', bold: true, values: ['45,000', '63,366', '76,109', '84,950', '91,085', '95,341'], tone: 'black', valueBold: true, right: 8 },
  { n: 29 },
];

const COLUMN_NAMES = ['A', 'B', 'C', 'D', 'E', 'F', 'G', 'H', 'I', 'J', 'K', 'L', 'M', 'N', 'O', 'P', 'Q', 'R', 'S'];

const rowHeight = (n: number) => (n === 1 ? 30 : n === 3 ? 27 : 24);

const SheetRow = ({ row }: { row: DataRow }) => {
  const fill = row.kind === 'title' || row.kind === 'band' ? '#4472c4' : row.kind === 'section' ? '#d9d9d9' : undefined;
  const isTitle = row.kind === 'title';
  const isBand = row.kind === 'band';
  const bold = row.bold || row.kind === 'section' || isTitle || isBand;
  const labelSize = isTitle ? 21.4 : isBand ? 18.7 : row.italic ? 14.7 : 14.15;
  const labelTone = isTitle || isBand ? '#fff' : undefined;
  const values = row.values ?? Array(6).fill('');
  return (
    <RowLine $h={rowHeight(row.n)} $freeze={row.n === 1}>
      <Gutter>{row.n >= 4 ? '·' : ''}</Gutter>
      <RowHead $on={row.kind === 'pick'}>{row.n}</RowHead>
      <Cell
        $fill={fill}
        $rule={row.rule}
        $bold={bold}
        $italic={row.italic}
        $tone={labelTone}
        $size={labelSize}
        $top={isTitle ? 3 : 1}
        $indent={row.italic ? 14 : isTitle || isBand ? 3 : 2}
        $pick={row.kind === 'pick'}
      >
        {row.label}
      </Cell>
      <Cell $fill={fill} $rule={row.rule} />
      {values.map((v, i) => (
        <Cell
          key={i}
          $fill={fill}
          $rule={row.rule}
          $right={isTitle ? 4 : row.right ?? 0}
          $tone={isTitle ? '#fff' : TONES[i === 0 && row.firstTone ? row.firstTone : row.tone ?? 'black']}
          $bold={isTitle || row.valueBold}
          $italic={row.valueItalic}
          $size={isTitle ? 14.5 : undefined}
          $top={isTitle ? 5 : 2}
          $year={isTitle}
        >
          {v}
        </Cell>
      ))}
    </RowLine>
  );
};

const GroupLabel = ({ name, launcher }: { name: string; launcher?: boolean }) => (
  <GroupFoot>
    <GroupName $shift={launcher}>{name}</GroupName>
    {launcher && <Launcher><LaunchIcon /></Launcher>}
  </GroupFoot>
);

const BigTool = ({ w, icon, lines, after = 'inline', muted }: { w: number; icon: React.ReactNode; lines: string[]; after?: 'inline' | 'below' | 'none'; muted?: boolean }) => (
  <BigButton $w={w} $muted={muted}>
    <BigIcon>{icon}</BigIcon>
    {lines.map((t, i) => (
      <LabelLine key={t}>
        {t}
        {after === 'inline' && i === lines.length - 1 && <Chev />}
      </LabelLine>
    ))}
    {after === 'below' && <ChevLine><Chev c={muted ? '#b1b1b1' : '#444'} /></ChevLine>}
  </BigButton>
);

const MENU: [string, number][] = [
  ['File', 62], ['Home', 73], ['Insert', 70], ['Draw', 68], ['Page Layout', 121], ['Formulas', 97],
  ['Data', 64], ['Review', 81], ['View', 64], ['Developer', 105], ['Help', 40],
];

export default function App() {
  return (
    <Page>
      <GlobalStyle />
      <TitleBar>
        <QuickBar>
          <AutoSaveLabel>AutoSave</AutoSaveLabel>
          <Toggle>Off</Toggle>
          <Tool $w={29}><WinSaveIcon /></Tool>
          <Tool $w={4} />
          <Tool $w={32}><UndoIcon /></Tool>
          <Tool $w={10}><Chev c="#fff" /></Tool>
          <Tool $w={3} />
          <Tool $w={36} $dim><RedoIcon /></Tool>
          <Tool $w={8} $dim><Chev c="#fff" /></Tool>
          <Tool $w={36}><TouchIcon /></Tool>
          <Tool $w={10}><Chev c="#fff" /></Tool>
          <Tool $w={44}><CustomizeIcon /></Tool>
        </QuickBar>
        <DocTitle>
          SaaS Valuation Model
          <Tri dir="d" c="#fff" size={9} />
        </DocTitle>
        <SearchBox>
          <LensIcon c="#2e5a45" />
          Search
        </SearchBox>
        <Account>
          <WarnIcon />
          <UserName>D'Errico, Jason</UserName>
          <Avatar>DJ</Avatar>
          <Tool $w={57.5}><DisplayIcon /></Tool>
          <Tool $w={57.5}><svg width="13" height="2"><rect width="13" height="1.400" fill="#fff" /></svg></Tool>
          <Tool $w={57.5}><RestoreIcon /></Tool>
          <Tool $w={57.5}>
            <svg width="15" height="15" viewBox="0 0 15 15" fill="none" stroke="#fff" strokeWidth="1.200"><path d="M1 1l13 13M14 1L1 14" /></svg>
          </Tool>
        </Account>
      </TitleBar>

      <MenuRow>
        {MENU.map(([name, w]) => (
          <MenuTab key={name} $w={w} $on={name === 'Home'}>{name}</MenuTab>
        ))}
        <MenuActions>
          <ActionButton $w={84}><ShareIcon />Share</ActionButton>
          <ActionButton $w={123}><BubbleIcon />Comments</ActionButton>
        </MenuActions>
      </MenuRow>

      <Ribbon>
        <Group $w={204}>
          <GroupBody>
            <PasteColumn>
              <PasteIcon />
              <PasteLabel>Paste</PasteLabel>
              <ChevLine><Chev /></ChevLine>
            </PasteColumn>
            <StackColumn $top={-1}>
              <TextRow><RowIcon $w={24}><CutIcon /></RowIcon>Cut</TextRow>
              <TextRow><RowIcon $w={24}><CopyIcon /></RowIcon>Copy<RowIcon $w={34}><Chev /></RowIcon></TextRow>
              <TextRow><RowIcon $w={24}><PainterIcon /></RowIcon>Format Painter</TextRow>
            </StackColumn>
          </GroupBody>
          <GroupLabel name="Clipboard" launcher />
        </Group>
        <Divider />
        <Group $w={282}>
          <GroupBody $pad={10}>
            <ToolRows>
              <ToolRow>
                <ComboBox $w={145}>Calibri<Chev /></ComboBox>
                <ComboBox $w={62}>8<Chev /></ComboBox>
                <Tool $w={34}>
                  <GrowGlyph><FontGlyph $size={21}>A</FontGlyph><svg width="8" height="6" viewBox="0 0 9 6"><path d="M1 5l3.500-3.500L8 5" fill="none" stroke="#2b88d8" strokeWidth="1.300" /></svg></GrowGlyph>
                </Tool>
                <Tool $w={23}>
                  <GrowGlyph><FontGlyph $size={17}>A</FontGlyph><svg width="8" height="6" viewBox="0 0 9 6"><path d="M1 1l3.500 3.500L8 1" fill="none" stroke="#2b88d8" strokeWidth="1.300" /></svg></GrowGlyph>
                </Tool>
              </ToolRow>
              <ToolRow>
                <Tool $w={28}><FontGlyph $size={16} $bold>B</FontGlyph></Tool>
                <Tool $w={28}><FontGlyph $size={16} $italic>I</FontGlyph></Tool>
                <Tool $w={26}><FontGlyph $size={16} $line>U</FontGlyph></Tool>
                <Tool $w={20}><Chev /></Tool>
                <Tool $w={12}><Bar /></Tool>
                <Tool $w={22}><BorderIcon /></Tool>
                <Tool $w={24}><Chev /></Tool>
                <Tool $w={6}><Bar /></Tool>
                <Tool $w={32}><FillA /></Tool>
                <Tool $w={12}><Chev /></Tool>
                <Tool $w={38}><ColorA $color="#ff0000">A</ColorA></Tool>
                <Tool $w={8}><Chev /></Tool>
              </ToolRow>
            </ToolRows>
          </GroupBody>
          <GroupLabel name="Font" launcher />
        </Group>
        <Divider />
        <Group $w={342}>
          <GroupBody $pad={9}>
            <ToolRows>
              <ToolRow>
                <Tool $w={28}><AlignLines y={[3, 8, 13]} lean="c" /></Tool>
                <Tool $w={28}><AlignLines y={[5, 10, 15]} lean="c" /></Tool>
                <Tool $w={28} $active><AlignLines y={[7, 11, 16]} lean="c" /></Tool>
                <Tool $w={8}><Bar /></Tool>
                <Tool $w={30}><OrientIcon /></Tool>
                <Tool $w={8}><Chev /></Tool>
              </ToolRow>
              <ToolRow>
                <Tool $w={28}><AlignLines y={[3, 7, 11, 15]} lean="l" /></Tool>
                <Tool $w={28}><AlignLines y={[3, 7, 11, 15]} lean="c" /></Tool>
                <Tool $w={28}><AlignLines y={[3, 7, 11, 15]} lean="r" /></Tool>
                <Tool $w={8}><Bar /></Tool>
                <Tool $w={29}><IndentIcon out /></Tool>
                <Tool $w={28}><IndentIcon /></Tool>
              </ToolRow>
            </ToolRows>
            <BlockSplit />
            <ToolRows>
              <ToolRow>
                <TextRow><RowIcon $w={33}><WrapIcon /></RowIcon>Wrap Text</TextRow>
              </ToolRow>
              <ToolRow>
                <TextRow><RowIcon $w={33}><MergeIcon /></RowIcon>Merge &amp; Center<RowIcon $w={36}><Chev /></RowIcon></TextRow>
              </ToolRow>
            </ToolRows>
          </GroupBody>
          <GroupLabel name="Alignment" launcher />
        </Group>
        <Divider />
        <Group $w={187}>
          <GroupBody $pad={9}>
            <ToolRows>
              <ToolRow>
                <ComboBox $w={168}>Number<Chev /></ComboBox>
              </ToolRow>
              <ToolRow>
                <Tool $w={26}><FontGlyph $size={21}>$</FontGlyph></Tool>
                <Tool $w={20}><Chev /></Tool>
                <Tool $w={30}><FontGlyph $size={21}>%</FontGlyph></Tool>
                <Tool $w={28}><CommaIcon /></Tool>
                <Tool $w={7}><Bar /></Tool>
                <Tool $w={30}><DecimalIcon more /></Tool>
                <Tool $w={29}><DecimalIcon /></Tool>
              </ToolRow>
            </ToolRows>
          </GroupBody>
          <GroupLabel name="Number" launcher />
        </Group>
        <Divider />
        <Group $w={237}>
          <GroupBody $pad={6}>
            <BigTool w={96} icon={<ConditionalIcon />} lines={['Conditional', 'Formatting']} />
            <BigTool w={68} icon={<TableIcon />} lines={['Format as', 'Table']} />
            <BigTool w={58} icon={<CellStyleIcon />} lines={['Cell', 'Styles']} />
          </GroupBody>
          <GroupLabel name="Styles" />
        </Group>
        <Divider />
        <Group $w={176}>
          <GroupBody $pad={9.5}>
            <BigTool w={52} icon={<InsertIcon />} lines={['Insert']} after="below" />
            <BigTool w={52} icon={<DeleteIcon />} lines={['Delete']} after="below" />
            <BigTool w={52} icon={<FormatIcon />} lines={['Format']} after="below" />
          </GroupBody>
          <GroupLabel name="Cells" />
        </Group>
        <Divider />
        <Group $w={247}>
          <GroupBody $pad={10}>
            <StackColumn $w={114} $row={29} $top={-3}>
              <TextRow><RowIcon $w={27}><SigmaIcon /></RowIcon>AutoSum<RowIcon $w={36}><Chev /></RowIcon></TextRow>
              <TextRow><RowIcon $w={27}><FillDownIcon /></RowIcon>Fill<RowIcon $w={18}><Chev /></RowIcon></TextRow>
              <TextRow><RowIcon $w={27}><EraserIcon /></RowIcon>Clear<RowIcon $w={18}><Chev /></RowIcon></TextRow>
            </StackColumn>
            <BigTool w={56} icon={<SortIcon />} lines={['Sort &', 'Filter']} />
            <BigTool w={54} icon={<FindIcon />} lines={['Find &', 'Select']} />
          </GroupBody>
          <GroupLabel name="Editing" />
        </Group>
        <Divider />
        <Group $w={72}>
          <GroupBody>
            <BigTool w={72} icon={<BoltIcon />} lines={['Ideas']} after="none" />
          </GroupBody>
          <GroupLabel name="Ideas" />
        </Group>
        <Divider />
        <Group $w={90}>
          <GroupBody>
            <BigTool w={90} icon={<SensitivityIcon />} lines={['Sensitivity']} after="below" muted />
          </GroupBody>
          <GroupLabel name="Sensitivity" />
        </Group>
        <Divider />
        <Group $w={74}>
          <GroupBody />
          <GroupFoot>
            <CollapseSlot>
              <svg width="12" height="8" viewBox="0 0 12 8" fill="none" stroke="#444" strokeWidth="1.200"><path d="M1 7l5-5 5 5" /></svg>
            </CollapseSlot>
          </GroupFoot>
        </Group>
      </Ribbon>

      <FormulaBar>
        <NameBox>A2<Tri dir="d" c="#777" /></NameBox>
        <GripDots><i /><i /><i /></GripDots>
        <FxBox>
          <Tool $w={44}>
            <svg width="15" height="15" viewBox="0 0 15 15" fill="none" stroke="#bdbdbd" strokeWidth="2"><path d="M1 1l13 13M14 1L1 14" /></svg>
          </Tool>
          <Tool $w={46}>
            <svg width="18" height="15" viewBox="0 0 18 15" fill="none" stroke="#bdbdbd" strokeWidth="2.400"><path d="M1 8l5 5L17 1" /></svg>
          </Tool>
          <Tool $w={44}><FxText>fx</FxText></Tool>
        </FxBox>
        <FormulaInput><Chev c="#777" /></FormulaInput>
      </FormulaBar>

      <SheetArea>
        <Sheet>
          <HeadRow>
            <LevelButtons><span>1</span><span>2</span></LevelButtons>
            <CornerCell>
              <svg width="17" height="17" viewBox="0 0 17 17"><path d="M17 0v17H0z" fill="#b4b4b4" /></svg>
            </CornerCell>
            {COLUMN_NAMES.map(c => <ColHead key={c} $on={c === 'A'}>{c}</ColHead>)}
          </HeadRow>
          {ROWS.map(r => <SheetRow key={r.n} row={r} />)}
          <OutlineRail />
          <PageBreak />
        </Sheet>
        <VScroll>
          <ScrollButton><Tri dir="u" c="#777" /></ScrollButton>
          <VTrack><VThumb /></VTrack>
          <ScrollButton><Tri dir="d" c="#777" /></ScrollButton>
        </VScroll>
      </SheetArea>

      <TabsBar>
        <TabNav><Tri dir="l" c="#bdbdbd" /><Tri dir="r" c="#bdbdbd" /></TabNav>
        <SheetTab $w={162}>Monthly Forecast</SheetTab>
        <SheetTab $w={150} $on>Financial Model</SheetTab>
        <AddSheet>+</AddSheet>
        <HScrollWrap>
          <HGrip><i /><i /><i /></HGrip>
          <HButton><Tri dir="l" c="#666" /></HButton>
          <HTrack><HThumb /></HTrack>
          <HButton><Tri dir="r" c="#666" /></HButton>
        </HScrollWrap>
      </TabsBar>

      <StatusBar>
        Ready
        <RowIcon $w={60}><MacroIcon /></RowIcon>
        <StatusRight>
          <ViewButton $on><GridViewIcon /></ViewButton>
          <ViewButton><PageViewIcon /></ViewButton>
          <ViewButton><BreakViewIcon /></ViewButton>
          <Tool $w={6} $h={1} />
          <ZoomSign>−</ZoomSign>
          <ZoomBar />
          <ZoomSign>+</ZoomSign>
          <ZoomValue>100%</ZoomValue>
        </StatusRight>
      </StatusBar>

      <Taskbar>
        <StartButton><WinLogo /></StartButton>
        <TaskSearch><LensIcon c="#222" size={24} />Type here to search</TaskSearch>
        <TaskItem $w={59}><CircleIcon /></TaskItem>
        <TaskItem $w={61}><TaskViewIcon /></TaskItem>
        <Tool $w={3} $h={1} />
        <TaskItem $w={62}><EdgeIcon /></TaskItem>
        <TaskItem $w={62}><FolderIcon /></TaskItem>
        <TaskItem $w={62}><StoreIcon /></TaskItem>
        <TaskItem $w={62} $open><ChromeIcon /></TaskItem>
        <TaskItem $w={62} $open><NotifyAppIcon /></TaskItem>
        <TaskItem $w={62} $open $current><ExcelIcon /></TaskItem>
        <Tray>
          <TrayItem><TrayCaret /></TrayItem>
          <TrayItem><BatteryIcon /></TrayItem>
          <TrayItem><WifiIcon /></TrayItem>
          <TrayItem><VolumeIcon /></TrayItem>
          <Clock>10:51 PM<br />07/13/2020</Clock>
          <NotifyBox><NotifyIcon /></NotifyBox>
        </Tray>
      </Taskbar>
    </Page>
  );
}
